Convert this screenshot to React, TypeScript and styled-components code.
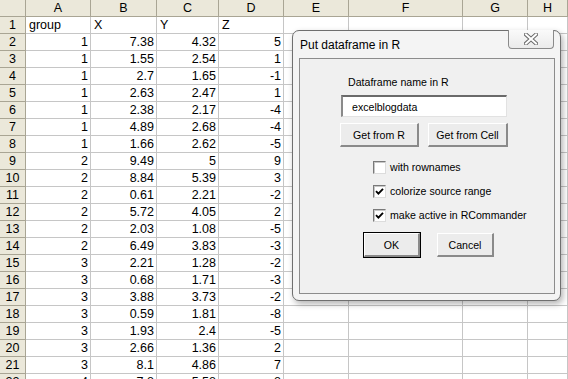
import React from 'react'
import styled, { createGlobalStyle } from 'styled-components'

const GlobalStyle = createGlobalStyle`
    html, body {
        margin: 0;
        padding: 0;
        background: #fff;
        overflow: hidden;
    }
`

const columns = ['A', 'B', 'C', 'D', 'E', 'F', 'G', 'H']

// group, X, Y, Z
const data: (string | number)[][] = [
    [1, 7.38, 4.32, 5],
    [1, 1.55, 2.54, 1],
    [1, 2.7, 1.65, -1],
    [1, 2.63, 2.47, 1],
    [1, 2.38, 2.17, -4],
    [1, 4.89, 2.68, -4],
    [1, 1.66, 2.62, -5],
    [2, 9.49, 5, 9],
    [2, 8.84, 5.39, 3],
    [2, 0.61, 2.21, -2],
    [2, 5.72, 4.05, 2],
    [2, 2.03, 1.08, -5],
    [2, 6.49, 3.83, -3],
    [3, 2.21, 1.28, -2],
    [3, 0.68, 1.71, -3],
    [3, 3.88, 3.73, -2],
    [3, 0.59, 1.81, -8],
    [3, 1.93, 2.4, -5],
    [3, 2.66, 1.36, 2],
    [3, 8.1, 4.86, 7],
    [4, 7.8, 5.58, 8],
    [4, 3.1, 2.9, 1]
]

const headerRow = ['group', 'X', 'Y', 'Z']

const options = [
    { label: 'with rownames', checked: false },
    { label: 'colorize source range', checked: true },
    { label: 'make active in RCommander', checked: true }
]

const App: React.FC = () => {
    const rows: (string | number)[][] = [headerRow, ...data]

    return (
        <>
            <GlobalStyle />
            <Screen>
                <Sheet>
                    <Corner />
                    {columns.map((c) => (
                        <ColHeader key={c}>{c}</ColHeader>
                    ))}
                    {rows.map((row, r) => (
                        <React.Fragment key={r}>
                            <RowHeader>{r + 1}</RowHeader>
                            {columns.map((c, ci) => {
                                const v = row[ci]
                                const isNum = typeof v === 'number'
                                return (
                                    <Cell key={c} $right={isNum}>
                                        {v !== undefined ? String(v) : ''}
                                    </Cell>
                                )
                            })}
                        </React.Fragment>
                    ))}
                </Sheet>

                <Dialog>
                    <TitleBar>
                        <Title>Put dataframe in R</Title>
                        <CloseButton>
                            <svg width="14" height="12" viewBox="0 0 14 12">
                                <path
                                    d="M2 1.5 L12 10.5 M12 1.5 L2 10.5"
                                    stroke="#6b6b6b"
                                    strokeWidth="4"
                                    strokeLinecap="square"
                                />
                                <path
                                    d="M2 1.5 L12 10.5 M12 1.5 L2 10.5"
                                    stroke="#fff"
                                    strokeWidth="2"
                                    strokeLinecap="square"
                                />
                            </svg>
                        </CloseButton>
                    </TitleBar>
                    <Client>
                        <Label>Dataframe name in R</Label>
                        <NameInput>excelblogdata</NameInput>
                        <ButtonRow $indent={0} $gap={9}>
                            <Button $w={79}>Get from R</Button>
                            <Button $w={80}>Get from Cell</Button>
                        </ButtonRow>
                        <Checks>
                            {options.map((o) => (
                                <CheckRow key={o.label}>
                                    <Box>
                                        {o.checked && (
                                            <svg width="9" height="9" viewBox="0 0 9 9">
                                                <path
                                                    d="M1 4.2 L3.4 6.6 L8 1.8"
                                                    stroke="#000"
                                                    strokeWidth="1.9"
                                                    fill="none"
                                                />
                                            </svg>
                                        )}
                                    </Box>
                                    <span>{o.label}</span>
                                </CheckRow>
                            ))}
                        </Checks>
                        <ButtonRow $indent={24} $gap={17}>
                            <Button $w={56} $default>
                                OK
                            </Button>
                            <Button $w={57}>Cancel</Button>
                        </ButtonRow>
                    </Client>
                </Dialog>
            </Screen>
        </>
    )
}

export default App

const Screen = styled.div`
    position: relative;
    width: 568px;
    height: 379px;
    overflow: hidden;
    background: #fff;
`

const Sheet = styled.div`
    display: grid;
    grid-template-columns: 26px 65px 66px 62px 65px 65px 114px 65px 1fr;
    grid-template-rows: 17px;
    grid-auto-rows: 17px;
    font-family: 'Liberation Sans', Arial, sans-serif;
    font-size: 12.5px;
    color: #000;
`

const HeaderBase = styled.div`
    box-sizing: border-box;
    background: #ebe8da;
    border-right: 1px solid #a9a594;
    border-bottom: 1px solid #a9a594;
    display: flex;
    align-items: center;
    justify-content: center;
    line-height: 1;
`

const Corner = styled(HeaderBase)``

const ColHeader = styled(HeaderBase)`
    padding-top: 1px;
`

const RowHeader = styled(HeaderBase)`
    padding-top: 1px;
`

const Cell = styled.div<{ $right?: boolean }>`
    box-sizing: border-box;
    border-right: 1px solid #c6c6c6;
    border-bottom: 1px solid #c6c6c6;
    display: flex;
    align-items: center;
    justify-content: ${(p) => (p.$right ? 'flex-end' : 'flex-start')};
    padding: 1px ${(p) => (p.$right ? '2px' : '0')} 0 ${(p) => (p.$right ? '0' : '3px')};
    white-space: nowrap;
    overflow: hidden;
    line-height: 1;
`

const Dialog = styled.div`
    position: absolute;
    left: 292px;
    top: 30px;
    width: 269px;
    height: 271px;
    box-sizing: border-box;
    display: flex;
    flex-direction: column;
    background: #f4f4f4;
    border: 1px solid #6f6f6f;
    border-radius: 7px;
    box-shadow: 2px 3px 6px rgba(0, 0, 0, 0.3);
    font-family: 'Liberation Sans', Arial, sans-serif;
    color: #000;
`

const TitleBar = styled.div`
    display: flex;
    justify-content: space-between;
    align-items: flex-start;
    height: 27px;
    padding: 0 6px 0 7px;
    flex-shrink: 0;
`

const Title = styled.div`
    font-size: 12px;
    padding-top: 7px;
`

const CloseButton = styled.div`
    width: 46px;
    height: 19px;
    box-sizing: border-box;
    margin-top: -1px;
    border: 1px solid #8a8a8a;
    border-top: none;
    border-radius: 0 0 4px 4px;
    background: linear-gradient(#fafafa, #ebebeb);
    display: flex;
    align-items: center;
    justify-content: center;
`

const Client = styled.div`
    flex: 1;
    margin: 0 5px 6px 6px;
    border: 1px solid #8c8c8c;
    background: #f0f0f0;
    padding: 17px 0 0 40px;
    display: flex;
    flex-direction: column;
    align-items: flex-start;
    font-size: 10.6px;
`

const Label = styled.div`
    margin-left: 8px;
    line-height: 13px;
`

const NameInput = styled.div`
    margin: 6px 0 0 1px;
    width: 166px;
    height: 22px;
    box-sizing: border-box;
    background: #fff;
    border-top: 2px solid #6a6a6a;
    border-left: 2px solid #8a8a8a;
    border-right: 1px solid #e2e2e2;
    border-bottom: 1px solid #e2e2e2;
    padding-left: 9px;
    display: flex;
    align-items: center;
`

const ButtonRow = styled.div<{ $indent: number; $gap: number }>`
    display: flex;
    gap: ${(p) => p.$gap}px;
    margin: 6px 0 0 ${(p) => p.$indent}px;
`

const Button = styled.div<{ $w: number; $default?: boolean }>`
    width: ${(p) => p.$w}px;
    height: 24px;
    box-sizing: border-box;
    background: #ececec;
    border-top: 1px solid #ffffff;
    border-left: 1px solid #ffffff;
    border-right: 2px solid #8a8a8a;
    border-bottom: 2px solid #8a8a8a;
    outline: ${(p) => (p.$default ? '1px solid #000' : 'none')};
    outline-offset: 0;
    display: flex;
    align-items: center;
    justify-content: center;
    white-space: nowrap;
`

const Checks = styled.div`
    display: flex;
    flex-direction: column;
    margin: 8px 0 0 33px;
`

const CheckRow = styled.div`
    display: flex;
    align-items: center;
    gap: 4px;
    height: 24px;
`

const Box = styled.div`
    width: 13px;
    height: 13px;
    box-sizing: border-box;
    background: #fff;
    border-top: 1px solid #7a7a7a;
    border-left: 1px solid #7a7a7a;
    border-right: 1px solid #dcdcdc;
    border-bottom: 1px solid #dcdcdc;
    box-shadow: inset 1px 1px 0 #c8c8c8;
    display: flex;
    align-items: center;
    justify-content: center;
`
